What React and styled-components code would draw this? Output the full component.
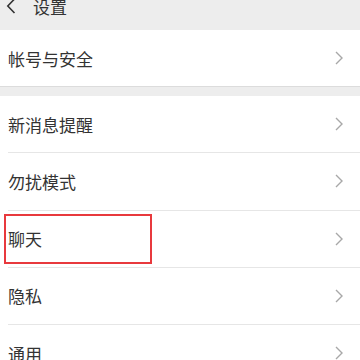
import React from 'react'
import styled, { createGlobalStyle } from 'styled-components'

const Global = createGlobalStyle`
  html, body {
    margin: 0;
    padding: 0;
    background: #ededed;
    font-family: "Noto Sans CJK SC", "Noto Sans", sans-serif;
  }
`

const Page = styled.div`
  width: 360px;
  height: 360px;
  overflow: hidden;
  background: #ededed;
`

const Header = styled.div`
  height: 30px;
  display: flex;
  align-items: center;
  padding: 0 0 18px 6px;
  box-sizing: border-box;
  color: #333;
  font-size: 17px;
`

const Title = styled.span`
  line-height: 1;
  margin-left: 17px;
`

const Group = styled.div`
  background: #fff;
  margin-bottom: ${p => p.$gap || 0}px;
  border-bottom: ${p => p.$edge ? '1px solid #dcdcdc' : 'none'};
`

const Row = styled.div`
  position: relative;
  height: ${p => p.$h || 56.25}px;
  display: flex;
  align-items: center;
  justify-content: space-between;
  padding: 0 17px 0 8px;
  font-size: 17px;
  color: #333;
  &::after {
    content: '';
    display: ${p => p.$last ? 'none' : 'block'};
    position: absolute;
    left: 8px;
    right: 0;
    bottom: -1px;
    height: 1px;
    background: #e6e6e6;
  }
  & + & {
    margin-top: 1px;
  }
`

const Highlight = styled.div`
  position: absolute;
  left: 4px;
  top: 3px;
  width: 148px;
  height: 50px;
  border: 2px solid #e8393d;
  box-sizing: border-box;
`

const Label = styled.span`
  position: relative;
  line-height: 1;
`

const Back = () => (
  <svg width="10" height="16" viewBox="0 0 10 16">
    <path d="M8.5 1 L1.8 8 L8.5 15" fill="none" stroke="#333" strokeWidth="1.6" />
  </svg>
)

const Arrow = () => (
  <svg width="8" height="14" viewBox="0 0 8 14">
    <path d="M1 1 L7 7 L1 13" fill="none" stroke="#a8a8a8" strokeWidth="1.4" />
  </svg>
)

const items = ['新消息提醒', '勿扰模式', '聊天', '隐私', '通用']

const App = () => {
  return (
    <Page>
      <Global />
      <Header>
        <Back />
        <Title>设置</Title>
      </Header>
      <Group $gap={9} $edge>
        <Row $h={56} $last>
          <Label>帐号与安全</Label>
          <Arrow />
        </Row>
      </Group>
      <Group>
        {items.map(t => (
          <Row key={t}>
            {t === '聊天' && <Highlight />}
            <Label>{t}</Label>
            <Arrow />
          </Row>
        ))}
      </Group>
    </Page>
  )
}

export default App
